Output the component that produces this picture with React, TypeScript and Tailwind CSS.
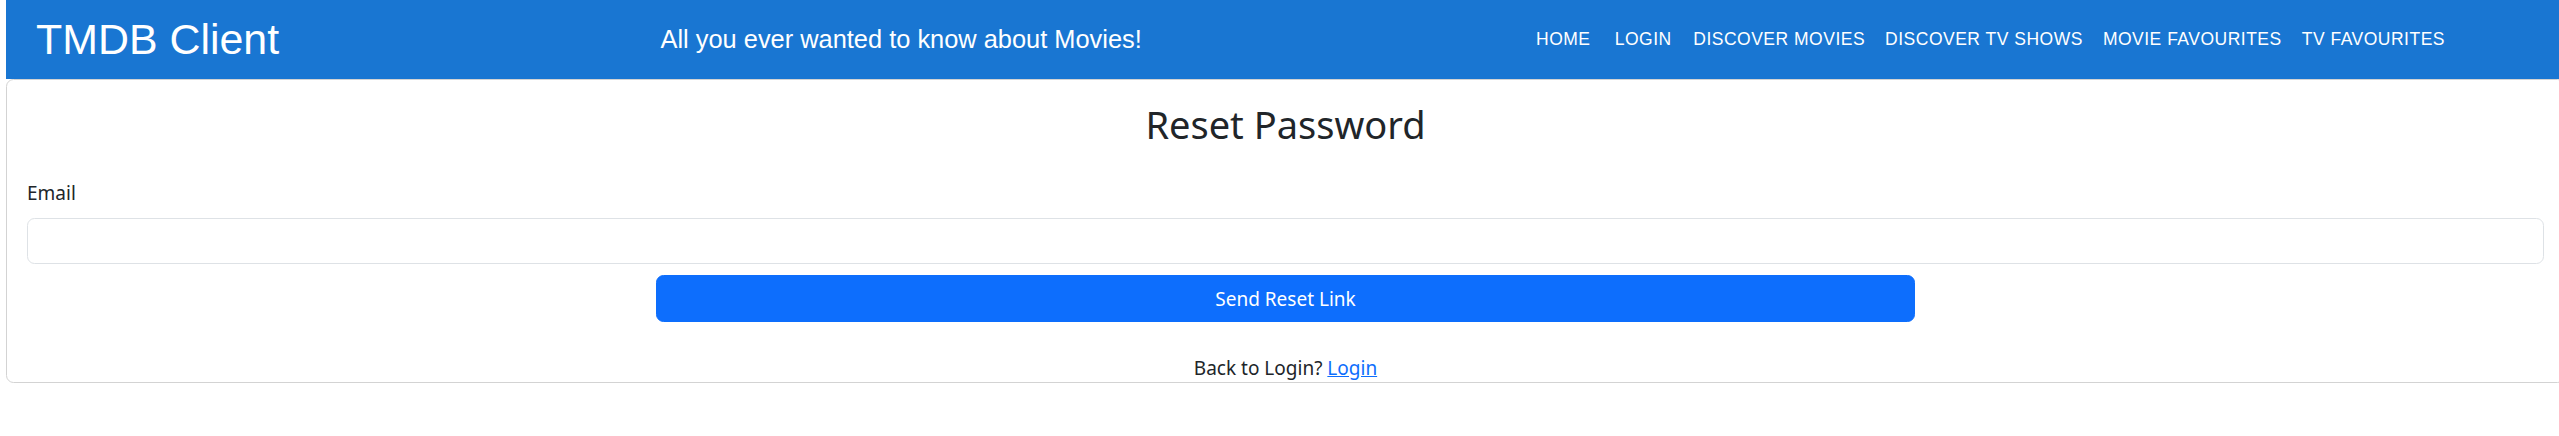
const navLinks = ["Home", "Login", "Discover Movies", "Discover TV Shows", "Movie Favourites", "TV Favourites"];

export default function App() {
  return (
    <div className="w-full overflow-hidden bg-white">
      <div className="ml-[6px] w-[2559px]">
        <header className="flex h-[79px] items-center bg-[#1976d2] px-[30px] font-['Liberation_Sans',Arial,sans-serif] text-white">
          <h1 className="grow text-[42.9px] leading-[1.235]">TMDB Client</h1>
          <p className="grow text-[25.4px] leading-[1.6]">All you ever wanted to know about Movies!</p>
          <nav className="mr-[80px] flex">
            {navLinks.map((link) => (
              <a
                key={link}
                href="#"
                className="min-w-[80px] px-[10px] py-[7.5px] text-center text-[17.5px] uppercase leading-[1.75] tracking-[0.5px]"
              >
                {link}
              </a>
            ))}
          </nav>
        </header>

        <main className="rounded-[7.5px] border border-[#d3d3d3] px-[20px] pt-[20px] font-['Noto_Sans',sans-serif] text-[#212529]">
          <h2 className="mb-[30px] text-center text-[38px] leading-[48px]">Reset Password</h2>

          <form onSubmit={(e) => e.preventDefault()}>
            <label htmlFor="email" className="mb-[10px] block text-[19px] leading-[30px]">
              Email
            </label>
            <input
              id="email"
              type="email"
              className="block h-[46px] w-full rounded-[7.5px] border border-[#dee2e6] px-[15px] text-[19px] outline-none"
            />
            <button
              type="submit"
              className="mx-auto mt-[11px] block h-[47px] w-1/2 rounded-[7.5px] border border-[#0d6efd] bg-[#0d6efd] text-[19px] leading-[30px] text-white"
            >
              Send Reset Link
            </button>
          </form>

          <p className="mt-[32px] text-center text-[19px] leading-[28px]">
            Back to Login?{" "}
            <a href="#" className="text-[#0d6efd] underline">
              Login
            </a>
          </p>
        </main>
      </div>
    </div>
  );
}
